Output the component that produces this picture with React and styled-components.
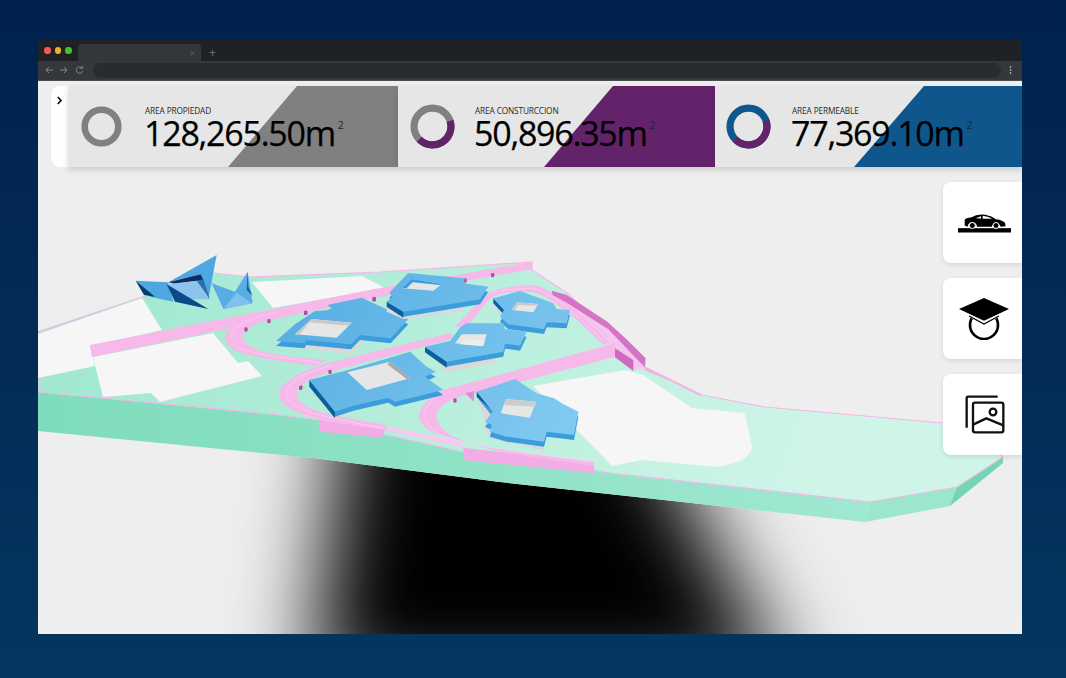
import React from 'react';
import styled, { createGlobalStyle } from 'styled-components';

const GlobalStyle = createGlobalStyle`
  html, body { margin: 0; padding: 0; height: 100%; }
  body {
    background: linear-gradient(180deg, #00214d 0%, #04365f 100%);
    font-family: "Open Sans", "Noto Sans", sans-serif;
    overflow: hidden;
  }
`;

const Page = styled.div`
  width: 1066px;
  height: 678px;
  padding: 40px 44px 44px 38px;
  box-sizing: border-box;
  display: flex;
`;

const Browser = styled.div`
  flex: 1;
  display: flex;
  flex-direction: column;
  border-radius: 4px 4px 0 0;
  overflow: hidden;
`;

const TitleBar = styled.div`
  height: 21px;
  background: #1f2125;
  display: flex;
  align-items: flex-end;
  padding-left: 6px;
  flex-shrink: 0;
`;

const Lights = styled.div`
  display: flex;
  gap: 4px;
  align-self: flex-start;
  margin-top: 7px;
  width: 34px;
`;

const Light = styled.span`
  width: 6.5px;
  height: 6.5px;
  border-radius: 50%;
  background: ${(p) => p.$color};
`;

const Tab = styled.div`
  width: 123px;
  height: 17px;
  background: #33363a;
  border-radius: 4px 4px 0 0;
  display: flex;
  align-items: center;
  justify-content: flex-end;
  padding-right: 5px;
  box-sizing: border-box;
  color: #55585c;
  font-size: 8px;
`;

const NewTab = styled.span`
  color: #6b6e72;
  font-size: 12px;
  margin-left: 8px;
  margin-bottom: 1px;
  line-height: 14px;
`;

const ToolBar = styled.div`
  height: 20px;
  background: #34383c;
  display: flex;
  align-items: center;
  padding: 0 10px 1px 7px;
  box-sizing: border-box;
  border-bottom: 1px solid #4a4d50;
  flex-shrink: 0;
`;

const NavIcons = styled.svg`
  width: 40px;
  height: 10px;
  margin-right: 8px;
  flex-shrink: 0;
`;

const UrlPill = styled.div`
  flex: 1;
  height: 15px;
  background: #292c2f;
  border-radius: 8px;
`;

const MenuDots = styled.svg`
  width: 3px;
  height: 8px;
  margin-left: 8px;
  flex-shrink: 0;
`;

const Stage = styled.div`
  flex: 1;
  position: relative;
  background: #eeeeee;
  overflow: hidden;
`;

const Scene = styled.svg`
  position: absolute;
  inset: 0;
  width: 100%;
  height: 100%;
`;

const StatsBar = styled.div`
  position: absolute;
  top: 5px;
  left: 13px;
  right: 0;
  display: flex;
  height: 81px;
`;

const Drawer = styled.div`
  width: 17px;
  background: #ffffff;
  border-radius: 9px 0 0 9px;
  display: flex;
  justify-content: center;
  padding-top: 10px;
  box-sizing: border-box;
  flex-shrink: 0;
`;

const Chevron = styled.svg`
  width: 7px;
  height: 9px;
`;

const StatCard = styled.div`
  width: ${(p) => p.$width}px;
  position: relative;
  background: #e6e6e6;
  box-shadow: 0 3px 6px rgba(0, 0, 0, 0.14);
  display: flex;
  align-items: center;
  padding-left: ${(p) => p.$pad}px;
  box-sizing: border-box;
  flex-shrink: 0;
`;

const Slant = styled.div`
  position: absolute;
  top: 0;
  bottom: 0;
  right: 0;
  width: ${(p) => p.$width}px;
  background: ${(p) => p.$color};
  clip-path: polygon(${(p) => p.$cut}px 0, 100% 0, 100% 100%, 0 100%);
`;

const Ring = styled.svg`
  width: ${(p) => p.$size}px;
  height: ${(p) => p.$size}px;
  flex-shrink: 0;
  position: relative;
`;

const StatText = styled.div`
  position: relative;
  margin-left: ${(p) => p.$gap}px;
  padding-top: 3px;
  color: #000;
`;

const StatLabel = styled.div`
  font-size: 8.3px;
  line-height: 10px;
  color: #2a2a2a;
  letter-spacing: -0.15px;
  margin-top: -3px;
`;

const StatValue = styled.div`
  font-size: 34px;
  line-height: 28px;
  letter-spacing: -1.25px;
  -webkit-text-stroke: 0.25px #000;
  white-space: nowrap;
  margin-top: 3px;
  margin-left: -1px;
  sup {
    font-size: 10px;
    line-height: 0;
    letter-spacing: 0;
    -webkit-text-stroke: 0;
    vertical-align: 17px;
    margin-left: 3px;
    color: #222;
  }
`;

const SideActions = styled.div`
  position: absolute;
  right: 0;
  top: 101px;
  display: flex;
  flex-direction: column;
  gap: 15px;
`;

const SideButton = styled.button`
  width: 79px;
  height: 81px;
  border: 0;
  background: #ffffff;
  border-radius: 8px 0 0 8px;
  box-shadow: 0 2px 5px rgba(0, 0, 0, 0.1);
  display: flex;
  align-items: center;
  justify-content: center;
  padding: 0 0 0 ${(p) => p.$shift}px;
`;

const Icon = styled.svg`
  width: ${(p) => p.$w}px;
  height: ${(p) => p.$h}px;
`;

const stats = [
  { width: 330, pad: 13, size: 41, gap: 23, label: 'AREA PROPIEDAD', value: '128,265.50m', color: '#808080', slantWidth: 170, cut: 69, ring: '#808080', part: null },
  { width: 317, pad: 12, size: 45, gap: 20, label: 'AREA CONSTURCCION', value: '50,896.35m', color: '#62236a', slantWidth: 171, cut: 69, ring: '#808080', part: '#62236a' },
  { width: 307, pad: 11, size: 45, gap: 21, label: 'AREA PERMEABLE', value: '77,369.10m', color: '#0f568d', slantWidth: 168, cut: 70, ring: '#0f568d', part: '#62236a' },
];

// arc on the ring, degrees clockwise from the top
const arcPath = (r, a0, a1) => {
  const pt = (a) => [50 + r * Math.sin((a * Math.PI) / 180), 50 - r * Math.cos((a * Math.PI) / 180)];
  const [x0, y0] = pt(a0);
  const [x1, y1] = pt(a1);
  return `M${x0} ${y0} A${r} ${r} 0 ${a1 - a0 > 180 ? 1 : 0} 1 ${x1} ${y1}`;
};

const Donut = ({ size, color, part }) => (
  <Ring $size={size} viewBox="0 0 100 100">
    <circle cx="50" cy="50" r="41" fill="none" stroke={color} strokeWidth="16" />
    {part && <path d={arcPath(41, 72, 226)} fill="none" stroke={part} strokeWidth="16" />}
  </Ring>
);

const CarIcon = () => (
  <Icon $w={55} $h={22} viewBox="80 110 165 65">
    <rect x="83" y="158" width="159" height="13" fill="#000" />
    <path d="M103 150 L103 133 Q106 127 122 126 Q140 115 165 118 Q185 122 197 131 Q218 134 224 142 L226 152 L211 154 A14 14 0 0 0 184 154 L140 154 A14 14 0 0 0 112 154 Z" fill="#000" />
    <path d="M136 128 L152 122 L152 129 Z M157 121 Q172 122 186 130 L157 130 Z" fill="#fff" />
    <circle cx="126" cy="150" r="9" fill="#000" stroke="#fff" strokeWidth="3" />
    <circle cx="197" cy="150" r="9" fill="#000" stroke="#fff" strokeWidth="3" />
  </Icon>
);

const CapIcon = () => (
  <Icon $w={52} $h={43} viewBox="85 367 156 129">
    <circle cx="163" cy="451" r="42" fill="none" stroke="#000" strokeWidth="8" />
    <path d="M105 420 L163 450 L221 420 L221 405 L105 405 Z" fill="#fff" />
    <path d="M118 424 L163 448 L208 424" fill="none" stroke="#000" strokeWidth="4" />
    <path d="M88 403 L163 370 L238 403 L163 438 Z" fill="#000" />
  </Icon>
);

const ImagesIcon = () => (
  <Icon $w={40} $h={39} viewBox="106 663 120 117">
    <path d="M204 668 L115 668 Q111 668 111 672 L111 761" fill="none" stroke="#111" strokeWidth="7" />
    <rect x="130" y="686" width="91" height="89" rx="6" fill="none" stroke="#111" strokeWidth="7" />
    <circle cx="190" cy="714" r="10" fill="none" stroke="#111" strokeWidth="7" />
    <path d="M130 752 L170 733 L221 754" fill="none" stroke="#111" strokeWidth="7" />
  </Icon>
);

// scene outline, page coordinates
const topSurface = '38,332 142,297 213,273 250,277 380,272 532,262 532,270 567,293 645,367 702,395 765,407 943,423 1003,457 957,487 870,502 610,473 463,452 320,420 270,414 38,392';
const sideFront = '38,392 270,414 320,420 463,452 610,473 870,502 865,522 500,482 313,458 38,431';
const sideRight = '870,502 957,487 950,506 865,522';
const sideEnd = '957,487 1003,457 1003,463 950,506';
const belowSite = '38,431 313,458 500,482 865,522 950,506 1022,480 1022,634 38,634';

const whiteAreas = [
  'M38 334 L142 298 L162 330 L90 347 L95 366 L38 378 Z',
  'M93 357 L213 333 L238 363 L248 361 L262 376 L160 402 L151 393 L103 397 Z',
  'M252 282 L362 276 L385 288 L273 308 Z',
  'M533 386 L625 370 L643 375 L692 408 L745 413 L752 447 Q750 462 717 467 L642 460 L612 466 L577 430 Z',
];

// buildings in the 3x crop coordinates of the middle of the site
const buildings = [
  {
    ground: '18,262 18,272 105,282 245,298 282,262 270,240',
    top: '18,258 75,208 135,168 190,165 172,150 275,128 415,193 362,250 270,240 243,268 108,255 104,265',
    court: '75,238 125,192 245,203 200,248',
    shade: '75,238 125,192 245,203 236,212 118,202 88,240',
    shadeColor: '#c9c9c9',
  },
  {
    ground: '350,150 350,170 400,192 580,168 585,145',
    top: '350,140 368,125 358,113 415,54 585,70 580,85 655,95 630,133 400,170',
    dark: '350,140 400,170 400,188 350,155',
    court: '395,100 425,72 515,87 490,107',
    shade: '395,100 425,72 515,87 510,90 428,82 410,100',
    shadeColor: '#3b9ddc',
  },
  {
    ground: '670,140 670,155 715,215 825,236 830,205',
    top: '670,130 750,108 850,145 860,162 900,165 890,205 830,202 822,222 715,208 690,185 702,165',
    dark: '670,130 702,165 702,178 670,144',
    court: '725,165 740,142 805,147 790,172',
    shade: '725,165 740,142 805,147 803,152 745,150 735,165',
    shadeColor: '#c9c9c9',
  },
  {
    ground: '465,285 530,352 675,325 680,295',
    top: '465,275 540,258 572,215 590,205 700,205 705,222 770,230 750,272 705,266 700,290 675,295 530,320',
    dark: '465,275 530,320 530,338 465,292',
    court: '555,265 575,238 650,238 640,272',
    shade: '570,268 585,252 645,258 638,274',
    shadeColor: '#ededed',
  },
  {
    ground: '118,385 195,487 250,472 250,455',
    top: '118,375 235,345 420,290 470,335 497,350 465,365 520,405 375,440 355,428 250,452 195,470',
    dark: '118,375 195,470 195,490 118,395',
    court: '232,352 360,320 420,370 290,405',
    shade: '360,320 420,370 410,372 352,328',
    shadeColor: '#a8a8a8',
  },
  {
    ground: '620,425 645,500 645,530 660,550 820,587 825,550',
    top: '620,410 735,372 800,415 852,430 875,445 925,470 912,540 830,530 822,560 710,545 660,530 665,510 645,500 668,470',
    dark: '620,410 668,450 665,465 620,425',
    court: '692,475 708,432 798,440 780,488',
    shade: '708,432 798,440 796,455 702,450',
    shadeColor: '#cccccc',
  },
];

const posts = [[312, 135], [107, 175], [668, 62], [585, 78], [92, 400], [555, 438], [180, 352]];
const leftPosts = [[687, 245], [618, 270], [797, 220], [1003, 178], [782, 442]];

// filled road bands, outer edge then back along the inner edge
const roads = [
  'M190 320 L545 233 L545 252 L200 345 Z',
  'M190 320 C90 345 25 385 28 420 C32 465 110 495 350 525 L345 508 C170 480 90 465 80 420 C75 395 120 365 200 345 Z',
  'M520 405 L1035 265 L1035 305 L600 420 Z',
  'M540 398 C480 420 445 455 448 485 C452 540 560 570 972 622 L972 632 C640 590 520 560 500 490 C495 460 530 435 600 415 Z',
  'M555 215 L640 125 Q670 95 790 90 Q860 100 1015 262 L1000 270 Q860 130 790 112 Q700 105 660 130 L590 215 Z',
];

const stripes = [
  'M540 410 C470 430 452 470 472 505 C505 555 600 575 960 618',
  'M180 332 C90 358 42 385 50 425 C70 468 160 485 340 520',
  'M660 118 Q700 100 790 100 Q850 110 1000 258',
];

const Buildings = () => (
  <g transform="translate(270 255) scale(0.33333)">
    {buildings.map((b) => (
      <g key={b.top}>
        <polygon points={b.ground} fill="#d9d9d9" />
        <polygon points={b.top} fill="#3b9ddc" transform="translate(0 15)" />
        {b.dark && <polygon points={b.dark} fill="#0b5f9f" />}
        <polygon points={b.top} fill="url(#roof)" />
        <polygon points={b.court} fill="#e6e6e6" />
        <polygon points={b.shade} fill={b.shadeColor} />
      </g>
    ))}
  </g>
);

const SiteScene = () => (
  <Scene viewBox="38 81 984 553">
    <defs>
      <filter id="blurShadow" filterUnits="userSpaceOnUse" x="50" y="150" width="1100" height="700">
        <feGaussianBlur stdDeviation="42" />
      </filter>
      <clipPath id="belowSite">
        <polygon points={belowSite} />
      </clipPath>
      <linearGradient id="surface" gradientUnits="userSpaceOnUse" x1="100" y1="280" x2="800" y2="520">
        <stop offset="0" stopColor="#a2e8d1" />
        <stop offset="1" stopColor="#cff5e8" />
      </linearGradient>
      <linearGradient id="front" gradientUnits="userSpaceOnUse" x1="40" y1="400" x2="870" y2="510">
        <stop offset="0" stopColor="#7edcbc" />
        <stop offset="1" stopColor="#a0e8d1" />
      </linearGradient>
      <linearGradient id="roof" gradientUnits="userSpaceOnUse" x1="100" y1="50" x2="800" y2="560">
        <stop offset="0" stopColor="#56ade2" />
        <stop offset="1" stopColor="#7fc8f0" />
      </linearGradient>
    </defs>

    <g clipPath="url(#belowSite)">
      <polygon points="356,300 583,300 790,690 312,690" fill="#000" filter="url(#blurShadow)" />
    </g>

    <polygon points={sideFront} fill="url(#front)" />
    <polygon points={sideRight} fill="#9be6cd" />
    <polygon points={sideEnd} fill="#72d6b4" />
    <polygon points={topSurface} fill="url(#surface)" stroke="#f5b6ea" strokeWidth="1.2" strokeLinejoin="round" />
    {whiteAreas.map((a) => (
      <path key={a} d={a} fill="#f6f6f6" />
    ))}

    {/* long straight road */}
    <polygon points="90,345 92,357 380,297 532,269 532,262 380,288" fill="#f6b9ea" />
    <g transform="translate(40 240) scale(0.33333)">
      <path d="M700 210 C620 225 555 260 555 295 C558 335 620 352 830 378 L860 360 C720 350 630 335 610 300 C595 275 640 250 705 232 Z" fill="#f6b9ea" />
      <path d="M700 218 C620 235 568 268 572 298 C585 338 690 348 840 368" fill="none" stroke="#fbd0f3" strokeWidth="2.5" />
      {leftPosts.map(([x, y]) => (
        <rect key={x} x={x - 5} y={y - 8} width="10" height="13" rx="4" fill="#b54ea6" />
      ))}
    </g>

    {/* pale ramp running along the wall, edge strip beyond it */}
    <g transform="translate(500 260) scale(0.33333)">
      <polygon points="150,100 200,125 325,208 400,290 437,325 400,330 320,252 200,150 140,112" fill="#f7c4ee" />
      <polygon points="437,322 605,405 600,408 510,362 432,330" fill="#f3b0e8" />
    </g>

    <g transform="translate(270 255) scale(0.33333)">
      <polygon points="145,495 345,522 335,548 150,530" fill="#f3ace6" />
      <polygon points="580,578 972,625 972,655 580,615" fill="#f3ace6" />
      <polygon points="345,525 360,515 570,560 580,578" fill="#f9c8f1" />
      {roads.map((d) => (
        <path key={d} d={d} fill="#f6b9ea" />
      ))}
      {stripes.map((d) => (
        <path key={d} d={d} fill="none" stroke="#fbd0f3" strokeWidth="2.5" />
      ))}
      <polygon points="585,415 612,408 612,440" fill="#e58cd8" />
      {posts.map(([x, y]) => (
        <rect key={x} x={x - 5} y={y - 8} width="10" height="13" rx="4" fill="#b54ea6" />
      ))}
    </g>

    {/* side walls of the raised ramps */}
    <g transform="translate(500 260) scale(0.33333)">
      <polygon points="155,92 200,105 322,185 382,240 437,295 435,322 382,268 325,208 200,128 158,105" fill="#d474c6" />
      <polygon points="345,265 400,300 400,333 345,292" fill="#d068c0" />
    </g>

    <Buildings />

    {/* folded roof pieces, 3x crop coordinates */}
    <g transform="translate(40 240) scale(0.33333)">
      <polygon points="515,130 585,155 623,95 638,190 550,207" fill="#58aee3" />
      <polygon points="550,207 590,158 635,190" fill="#7fc0ec" />
      <polygon points="623,95 625,140 638,168 620,150" fill="#1c5e9c" />
      <polygon points="287,122 385,127 400,185 330,170" fill="#4ea7e0" />
      <polygon points="287,122 345,170 312,165" fill="#0a3a6e" />
      <polygon points="385,127 530,45 505,178 482,103" fill="#4ea7e0" />
      <polygon points="385,127 482,103 490,120 405,132" fill="#0b2f5e" />
      <polygon points="380,133 470,122 508,178 440,178" fill="#8cc4ee" />
      <polygon points="470,122 490,118 510,178" fill="#2d6fae" />
      <polygon points="380,133 505,207 405,185" fill="#0a4a88" />
    </g>
  </Scene>
);

export default function App() {
  return (
    <>
      <GlobalStyle />
      <Page>
        <Browser>
          <TitleBar>
            <Lights>
              <Light $color="#fb5650" />
              <Light $color="#f0b428" />
              <Light $color="#3fc42f" />
            </Lights>
            <Tab>✕</Tab>
            <NewTab>+</NewTab>
          </TitleBar>
          <ToolBar>
            <NavIcons viewBox="0 0 40 10">
              <path d="M8 5 H1 M4 2 L1 5 L4 8 M15 5 H22 M19 2 L22 5 L19 8" fill="none" stroke="#85888b" strokeWidth="1" />
              <path d="M37 3 A3.2 3.2 0 1 0 37.6 6" fill="none" stroke="#85888b" strokeWidth="1" />
              <path d="M37.6 1 V3.4 H35.2" fill="none" stroke="#85888b" strokeWidth="0.9" />
            </NavIcons>
            <UrlPill />
            <MenuDots viewBox="0 0 3 8">
              <circle cx="1.5" cy="1" r="0.8" fill="#ddd" />
              <circle cx="1.5" cy="4" r="0.8" fill="#ddd" />
              <circle cx="1.5" cy="7" r="0.8" fill="#ddd" />
            </MenuDots>
          </ToolBar>
          <Stage>
            <SiteScene />
            <StatsBar>
              <Drawer>
                <Chevron viewBox="0 0 7 9">
                  <path d="M1.8 1 L5 4.5 L1.8 8" fill="none" stroke="#111" strokeWidth="1.7" />
                </Chevron>
              </Drawer>
              {stats.map((s) => (
                <StatCard key={s.label} $width={s.width} $pad={s.pad}>
                  <Slant $width={s.slantWidth} $cut={s.cut} $color={s.color} />
                  <Donut size={s.size} color={s.ring} part={s.part} />
                  <StatText $gap={s.gap}>
                    <StatLabel>{s.label}</StatLabel>
                    <StatValue>
                      {s.value}
                      <sup>2</sup>
                    </StatValue>
                  </StatText>
                </StatCard>
              ))}
            </StatsBar>
            <SideActions>
              <SideButton $shift={3}>
                <CarIcon />
              </SideButton>
              <SideButton $shift={3}>
                <CapIcon />
              </SideButton>
              <SideButton $shift={5}>
                <ImagesIcon />
              </SideButton>
            </SideActions>
          </Stage>
        </Browser>
      </Page>
    </>
  );
}
